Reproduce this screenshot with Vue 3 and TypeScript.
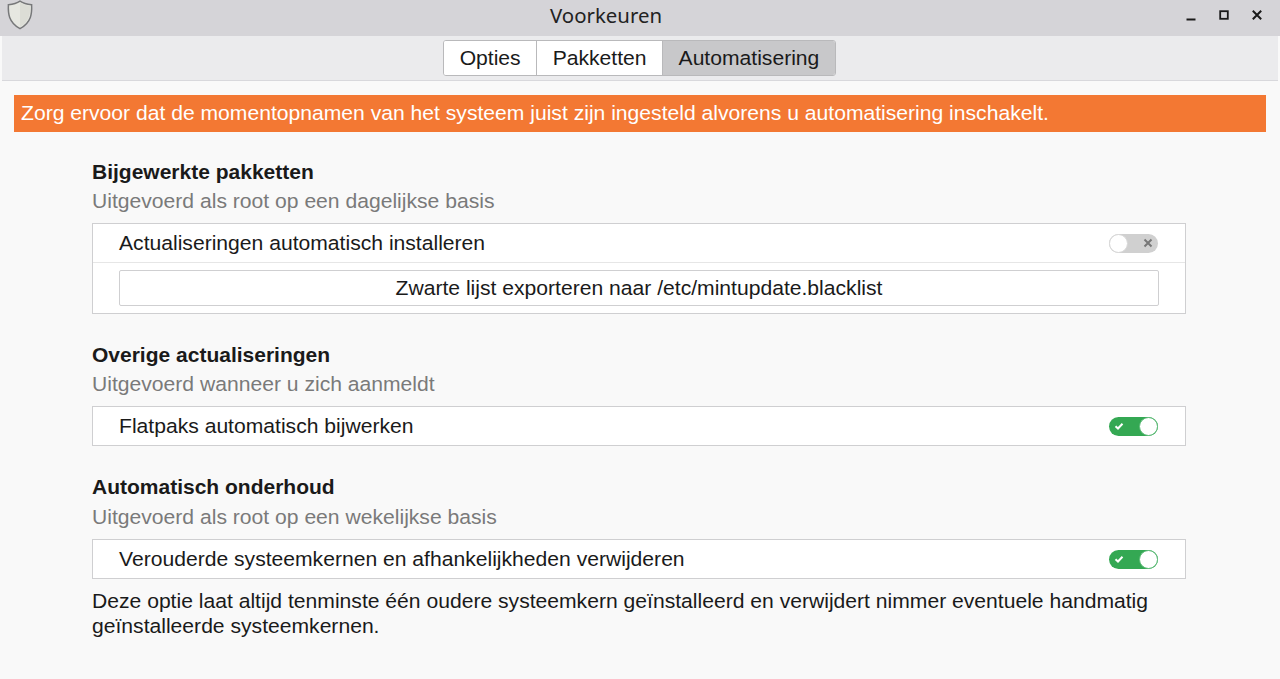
<script setup lang="ts">
interface Row { label: string; on: boolean }
interface Section { title: string; sub: string; rows: Row[]; button?: string }
const sections: Section[] = [
  { title: 'Bijgewerkte pakketten', sub: 'Uitgevoerd als root op een dagelijkse basis', rows: [{ label: 'Actualiseringen automatisch installeren', on: false }], button: 'Zwarte lijst exporteren naar /etc/mintupdate.blacklist' },
  { title: 'Overige actualiseringen', sub: 'Uitgevoerd wanneer u zich aanmeldt', rows: [{ label: 'Flatpaks automatisch bijwerken', on: true }] },
  { title: 'Automatisch onderhoud', sub: 'Uitgevoerd als root op een wekelijkse basis', rows: [{ label: 'Verouderde systeemkernen en afhankelijkheden verwijderen', on: true }] },
]
const tabs = ['Opties', 'Pakketten', 'Automatisering']
</script>

<template>
  <div class="window">
    <header class="titlebar">
      <svg class="shield" width="30" height="30" viewBox="0 0 30 30">
        <path d="M15 1.2 C11.5 3.6 7.5 4.4 3.4 4.8 C3 13 3.4 22.4 15 28.6 C26.6 22.4 27 13 26.6 4.8 C22.5 4.4 18.5 3.6 15 1.2Z" fill="#e6e7e1" stroke="#77787a" stroke-width="1.5" />
        <path d="M15 2.6 C18 4.6 21.5 5.4 25.2 6 C25.4 13.5 24.5 21.8 15 27Z" fill="#dcddd6" />
      </svg>
      <span class="title">Voorkeuren</span>
      <div class="controls">
        <svg width="14" height="14" viewBox="0 0 14 14"><path d="M2.5 11.5H11.5" stroke="#1a1a1a" stroke-width="2" /></svg>
        <svg width="14" height="14" viewBox="0 0 14 14"><rect x="3.2" y="3.2" width="7.6" height="7.6" fill="none" stroke="#1a1a1a" stroke-width="1.8" /></svg>
        <svg width="14" height="14" viewBox="0 0 14 14"><path d="M2.8 2.8 11.2 11.2M11.2 2.8 2.8 11.2" stroke="#1a1a1a" stroke-width="2" /></svg>
      </div>
    </header>
    <nav class="toolbar">
      <div class="tabs">
        <button v-for="(t, i) in tabs" :key="t" class="tab" :class="{ active: i === 2 }">{{ t }}</button>
      </div>
    </nav>
    <main class="content">
      <div class="banner">Zorg ervoor dat de momentopnamen van het systeem juist zijn ingesteld alvorens u automatisering inschakelt.</div>
      <div class="sections">
        <section v-for="s in sections" :key="s.title" class="section">
          <h2 class="heading">{{ s.title }}</h2>
          <p class="sub">{{ s.sub }}</p>
          <div class="box">
            <div v-for="r in s.rows" :key="r.label" class="row">
              <span>{{ r.label }}</span>
              <span class="switch" :class="{ on: r.on }">
                <svg v-if="r.on" class="mark" width="10" height="10" viewBox="0 0 10 10"><path d="M1.5 5.2 4 7.5 8.5 2.8" fill="none" stroke="#fff" stroke-width="2" /></svg>
                <svg v-else class="mark" width="10" height="10" viewBox="0 0 10 10"><path d="M1.5 1.5 8.5 8.5M8.5 1.5 1.5 8.5" stroke="#777" stroke-width="2" /></svg>
                <span class="knob"></span>
              </span>
            </div>
            <div v-if="s.button" class="button-row"><button class="wide">{{ s.button }}</button></div>
          </div>
        </section>
      </div>
      <p class="note">Deze optie laat altijd tenminste één oudere systeemkern geïnstalleerd en verwijdert nimmer eventuele handmatig geïnstalleerde systeemkernen.</p>
    </main>
  </div>
</template>

<style>
html, body { margin: 0; background: #f9f9f9; }
</style>

<style scoped>
.window { width: 1280px; height: 679px; overflow: hidden; display: flex; flex-direction: column; font-family: "Liberation Sans", Arial, sans-serif; font-size: 21.12px; color: #1a1a1a; background: #f9f9f9; }
.titlebar { height: 36px; flex: none; background: #d5d4d8; display: flex; align-items: center; justify-content: center; position: relative; padding-right: 68px; }
.shield { position: absolute; left: 5px; top: 0; }
.title { font-family: "Noto Sans", sans-serif; font-size: 20.4px; color: #222; margin-top: -6px; }
.controls { position: absolute; right: 16px; top: 8px; display: flex; gap: 19px; }
.toolbar { height: 44px; flex: none; margin: 0 2px; background: #ebebed; border-bottom: 1px solid #d8d8dc; display: flex; justify-content: center; align-items: center; padding-right: 1px; }
.tabs { display: flex; border: 1px solid #b9b9bb; border-radius: 3px; height: 36px; box-sizing: border-box; background: #fff; overflow: hidden; }
.tab { font: inherit; color: inherit; background: #fff; border: 0; border-right: 1px solid #b9b9bb; padding: 0 15.5px; height: 100%; }
.tab:last-child { border-right: 0; }
.tab.active { background: #c8c8ca; }
.content { flex: 1; padding: 14px 14px 0; }
.banner { background: #f37833; color: #fff; height: 37px; line-height: 36px; padding: 0 7px; white-space: nowrap; }
.sections { padding: 0 80px 0 78px; margin-top: 27px; display: flex; flex-direction: column; gap: 28px; }
.section { display: flex; flex-direction: column; }
.heading { margin: 0; font-size: 21px; line-height: 26px; font-weight: 700; }
.sub { margin: 3px 0 9px; line-height: 26px; color: #7a7a7a; }
.section:nth-child(3) .sub { margin-top: 4px; }
.box { background: #fff; border: 1px solid #cfcfd1; }
.row { height: 38px; display: flex; align-items: center; justify-content: space-between; padding: 0 27px 0 26px; }
.button-row { border-top: 1px solid #e6e6e6; padding: 7px 26px 7px 26px; }
.wide { display: block; width: 100%; height: 36px; box-sizing: border-box; background: #fff; border: 1px solid #cfcfd1; border-radius: 2px; font: inherit; color: inherit; padding: 0; }
.switch { width: 49px; height: 19px; border-radius: 10px; background: #d0d0d0; position: relative; display: block; }
.switch.on { background: #34a853; }
.knob { position: absolute; left: 0; top: 0; width: 19px; height: 19px; box-sizing: border-box; border-radius: 50%; background: #fff; border: 1px solid #d8d8d8; }
.switch.on .knob { left: 30px; border-color: #5dbb78; }
.mark { position: absolute; right: 5px; top: 4.5px; }
.switch.on .mark { left: 5px; right: auto; }
.note { margin: 9px 0 0 78px; width: 1094px; line-height: 25px; }
</style>
